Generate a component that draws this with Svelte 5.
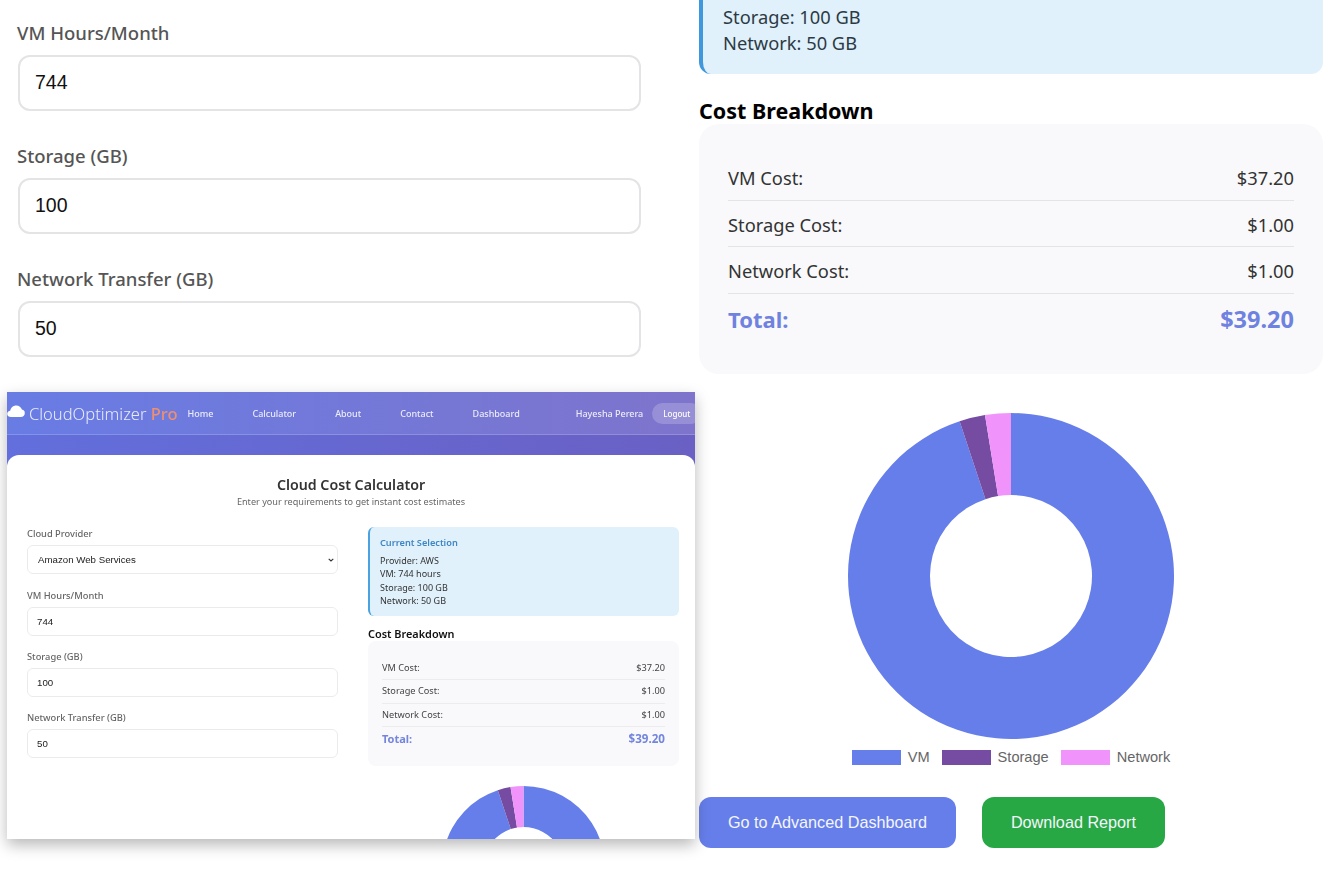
<script>
	const fields = [
		{ label: 'VM Hours/Month', value: '744' },
		{ label: 'Storage (GB)', value: '100' },
		{ label: 'Network Transfer (GB)', value: '50' }
	];
	const costs = [
		{ label: 'VM Cost:', value: '$37.20' },
		{ label: 'Storage Cost:', value: '$1.00' },
		{ label: 'Network Cost:', value: '$1.00' }
	];
	const links = ['Home', 'Calculator', 'About', 'Contact', 'Dashboard'];
	const slices = [
		{ name: 'VM', value: 37.2, color: '#667eea' },
		{ name: 'Storage', value: 1, color: '#764ba2' },
		{ name: 'Network', value: 1, color: '#f093fb' }
	];

	const polar = (r, a) => `${(r * Math.sin(a)).toFixed(3)} ${(-r * Math.cos(a)).toFixed(3)}`;

	// doughnut slices, clockwise from 12 o'clock
	const total = slices.reduce((sum, s) => sum + s.value, 0);
	let angle = 0;
	const arcs = slices.map((s) => {
		const start = angle;
		angle += (s.value / total) * Math.PI * 2;
		const large = angle - start > Math.PI ? 1 : 0;
		const d = `M${polar(163, start)} A163 163 0 ${large} 1 ${polar(163, angle)} L${polar(81, angle)} A81 81 0 ${large} 0 ${polar(81, start)} Z`;
		return { ...s, d };
	});
</script>

{#snippet donut(cls)}
	<svg class={cls} viewBox="-163 -163 326 326" aria-hidden="true">
		{#each arcs as arc}
			<path d={arc.d} fill={arc.color} />
		{/each}
	</svg>
{/snippet}

<div class="page">
	<div class="left">
		{#each fields as field}
			<div class="field">
				<label for={field.label}>{field.label}</label>
				<input id={field.label} type="text" value={field.value} />
			</div>
		{/each}

		<div class="shot">
			<nav class="nav">
				<svg class="cloud" viewBox="0 0 18 12" aria-hidden="true">
					<path d="M4 12C1.8 12 .2 10.7 .2 8.9 .2 7.2 1.5 6 3.2 5.8 3.7 2.6 6.2 .4 9.3 .4c2.7 0 4.9 1.7 5.6 4.2 1.7.3 2.9 1.5 2.9 3.3 0 2.4-1.7 4.1-4 4.1Z" fill="#fff" />
				</svg>
				<span class="brand">CloudOptimizer <span class="pro">Pro</span></span>
				<div class="links">
					{#each links as link}
						<span>{link}</span>
					{/each}
				</div>
				<span class="user">Hayesha Perera</span>
				<span class="logout">Logout</span>
			</nav>
			<div class="band">
				<main class="card">
					<h1>Cloud Cost Calculator</h1>
					<p class="sub">Enter your requirements to get instant cost estimates</p>
					<div class="cols">
						<div class="mini-form">
							<div class="mini-field first">
								<span class="mini-label">Cloud Provider</span>
								<select class="mini-input">
									<option>Amazon Web Services</option>
								</select>
							</div>
							{#each fields as field}
								<div class="mini-field">
									<span class="mini-label">{field.label}</span>
									<input class="mini-input" type="text" value={field.value} />
								</div>
							{/each}
						</div>
						<div class="mini-results">
							<div class="mini-selection">
								<h4>Current Selection</h4>
								<p>Provider: AWS</p>
								<p>VM: 744 hours</p>
								<p>Storage: 100 GB</p>
								<p>Network: 50 GB</p>
							</div>
							<h3 class="mini-heading">Cost Breakdown</h3>
							<div class="mini-costs">
								{#each costs as cost}
									<div class="mini-row">
										<span>{cost.label}</span><span>{cost.value}</span>
									</div>
								{/each}
								<div class="mini-row mini-total">
									<span>Total:</span><span>$39.20</span>
								</div>
							</div>
							{@render donut('mini-donut')}
						</div>
					</div>
				</main>
			</div>
		</div>
	</div>

	<div class="right">
		<div class="selection">
			<p>Storage: 100 GB</p>
			<p>Network: 50 GB</p>
		</div>
		<h3 class="heading">Cost Breakdown</h3>
		<div class="costs">
			{#each costs as cost}
				<div class="row">
					<span>{cost.label}</span><span>{cost.value}</span>
				</div>
			{/each}
			<div class="row total">
				<span>Total:</span><span>$39.20</span>
			</div>
		</div>
		{@render donut('donut')}
		<div class="legend">
			{#each slices as s}
				<span class="legend-item">
					<i style="background: {s.color}"></i>{s.name}
				</span>
			{/each}
		</div>
		<div class="actions">
			<button class="btn blue">Go to Advanced Dashboard</button>
			<button class="btn green">Download Report</button>
		</div>
	</div>
</div>

<style>
	:global(body) {
		margin: 0;
		background: #fff;
	}

	.page {
		display: grid;
		grid-template-columns: 699px 624px;
		height: 878px;
		overflow: hidden;
		font-family: 'Noto Sans', 'Open Sans', sans-serif;
		color: #222;
	}

	/* big form, top left */
	.left {
		padding-top: 20px;
	}

	.field {
		display: flex;
		flex-direction: column;
		gap: 9px;
		padding-left: 17px;
		margin-bottom: 32px;
	}

	.field label {
		font-size: 18.5px;
		font-weight: 500;
		line-height: 26px;
		color: #555;
	}

	.field input {
		box-sizing: border-box;
		width: 623px;
		height: 56px;
		margin-left: 1px;
		padding: 0 15px 2px;
		border: 2px solid #e4e4e6;
		border-radius: 12px;
		background: #fff;
		font-family: 'Liberation Sans', Arial, sans-serif;
		font-size: 19.5px;
		color: #111;
		outline: none;
	}

	/* nested screenshot */
	.shot {
		width: 688px;
		height: 447px;
		margin: 35px 0 0 7px;
		overflow: hidden;
		background: #fff;
		box-shadow: 0 6px 14px rgba(0, 0, 0, 0.28);
		position: relative;
		filter: blur(0.25px);
	}

	.nav {
		display: flex;
		align-items: center;
		height: 43px;
		box-sizing: border-box;
		border-bottom: 1px solid rgba(255, 255, 255, 0.18);
		background: linear-gradient(90deg, #687ce4, #7e74cc);
		color: rgba(255, 255, 255, 0.85);
		font-size: 9px;
		font-weight: 500;
	}

	.cloud {
		width: 18px;
		height: 12px;
		margin: 0 4px 4px 0;
		flex: none;
	}

	.brand {
		font-size: 16.5px;
		font-weight: 300;
		white-space: nowrap;
		color: rgba(255, 255, 255, 0.85);
	}

	.pro {
		font-weight: 500;
		color: #ee8f70;
	}

	.links {
		display: flex;
		gap: 39px;
		margin-left: 10px;
	}

	.user {
		margin-left: 56px;
		white-space: nowrap;
	}

	.logout {
		flex: none;
		margin-left: 9px;
		padding: 5px 11px;
		border-radius: 12px;
		background: rgba(255, 255, 255, 0.2);
		font-size: 8px;
		color: #fff;
	}

	.band {
		height: 404px;
		padding-top: 20px;
		box-sizing: border-box;
		background: linear-gradient(90deg, #626fdc 0%, #6a60c4 100%) top / 100% 40px no-repeat;
	}

	.card {
		height: 384px;
		box-sizing: border-box;
		padding-top: 21px;
		border-radius: 12px 12px 0 0;
		background: #fff;
		overflow: hidden;
	}

	.card h1 {
		margin: 0;
		font-size: 14.2px;
		line-height: 18px;
		font-weight: 600;
		text-align: center;
		color: #333;
	}

	.sub {
		margin: 0;
		font-size: 9.1px;
		line-height: 16px;
		text-align: center;
		color: #666;
	}

	.cols {
		display: grid;
		grid-template-columns: 311px 311px;
		gap: 30px;
		padding: 17px 0 0 20px;
	}

	.mini-form {
		display: flex;
		flex-direction: column;
		gap: 14px;
	}

	.mini-field {
		display: flex;
		flex-direction: column;
		gap: 4px;
	}

	.mini-field.first {
		margin-bottom: 1px;
	}

	.mini-label {
		font-size: 9.3px;
		line-height: 14px;
		font-weight: 500;
		color: #666;
	}

	.mini-input {
		box-sizing: border-box;
		width: 311px;
		height: 29px;
		padding: 0 9px 1px;
		border: 1px solid #ebebee;
		border-radius: 6px;
		background: #fff;
		font-family: 'Liberation Sans', Arial, sans-serif;
		font-size: 9.7px;
		color: #222;
		outline: none;
	}

	select.mini-input {
		appearance: none;
		padding: 0 10px 1px;
		background: #fff url("data:image/svg+xml,%3Csvg xmlns='http://www.w3.org/2000/svg' width='6' height='4' viewBox='0 0 6 4'%3E%3Cpath d='M.7.8 3 3l2.3-2.2' fill='none' stroke='%23333' stroke-width='1.1'/%3E%3C/svg%3E") no-repeat right 3px center;
	}

	.mini-selection {
		box-sizing: border-box;
		height: 89px;
		padding: 9px 10px 0;
		border-left: 2px solid #4aa3e0;
		border-radius: 6px;
		background: #e0f1fb;
	}

	.mini-selection h4 {
		margin: 0 0 5px;
		font-size: 9.2px;
		line-height: 13px;
		font-weight: 600;
		color: #3f86c4;
	}

	.mini-selection p {
		margin: 0;
		font-size: 9px;
		line-height: 13.3px;
		color: #333;
	}

	.mini-heading {
		margin: 11px 0 0;
		font-size: 10.9px;
		line-height: 14px;
		font-weight: 600;
		color: #111;
	}

	.mini-costs {
		box-sizing: border-box;
		height: 125px;
		margin-top: 0;
		padding: 16px 14px 0;
		border-radius: 8px;
		background: #f9f9fb;
	}

	.mini-row {
		display: flex;
		justify-content: space-between;
		height: 23.4px;
		box-sizing: border-box;
		padding-top: 4px;
		border-bottom: 1px solid #ececee;
		font-size: 9.2px;
		line-height: 14px;
		color: #444;
	}

	.mini-total {
		border-bottom: 0;
		padding-top: 5px;
		font-size: 11px;
		font-weight: 700;
		color: #7385dd;
	}

	.mini-total span:last-child {
		font-size: 11.6px;
	}

	:global(.mini-donut) {
		display: block;
		width: 163px;
		height: 163px;
		margin: 20px auto 0;
	}

	/* right column */
	.selection {
		box-sizing: border-box;
		height: 74px;
		padding: 4px 0 0 20px;
		border-left: 4px solid #3f97dc;
		border-radius: 0 0 12px 12px;
		background: #e0f1fb;
		font-size: 18.3px;
		line-height: 26px;
		color: #2d3a45;
	}

	.selection p {
		margin: 0;
	}

	.heading {
		margin: 23px 0 0;
		font-size: 21.5px;
		line-height: 28px;
		font-weight: 700;
		color: #000;
	}

	.costs {
		box-sizing: border-box;
		height: 250px;
		margin-top: -1px;
		padding: 30px 29px 0;
		border-radius: 20px;
		background: #f9f9fb;
	}

	.row {
		display: flex;
		justify-content: space-between;
		box-sizing: border-box;
		height: 46.6px;
		padding-top: 10px;
		border-bottom: 1px solid #e4e4e6;
		font-size: 18.3px;
		line-height: 28px;
		color: #333;
	}

	.total {
		border-bottom: 0;
		padding-top: 11px;
		font-size: 22px;
		font-weight: 700;
		color: #6f82e0;
	}

	.total span:last-child {
		font-size: 23.5px;
	}

	:global(.donut) {
		display: block;
		width: 326px;
		height: 326px;
		margin: 39px auto 0;
	}

	.legend {
		display: flex;
		justify-content: center;
		gap: 12px;
		margin-top: 11px;
		height: 15px;
		font-family: 'Liberation Sans', Arial, sans-serif;
		font-size: 14.6px;
		line-height: 15px;
		color: #666;
	}

	.legend-item {
		display: flex;
		align-items: center;
		gap: 7px;
	}

	.legend-item i {
		width: 49px;
		height: 15px;
	}

	.actions {
		display: flex;
		gap: 26px;
		margin-top: 32px;
	}

	.btn {
		height: 51px;
		padding: 0 29px;
		border: 0;
		border-radius: 12px;
		font-family: 'Liberation Sans', Arial, sans-serif;
		font-size: 16.2px;
		color: #f4f6fb;
	}

	.blue {
		background: #667eea;
	}

	.green {
		background: #28a745;
	}
</style>
